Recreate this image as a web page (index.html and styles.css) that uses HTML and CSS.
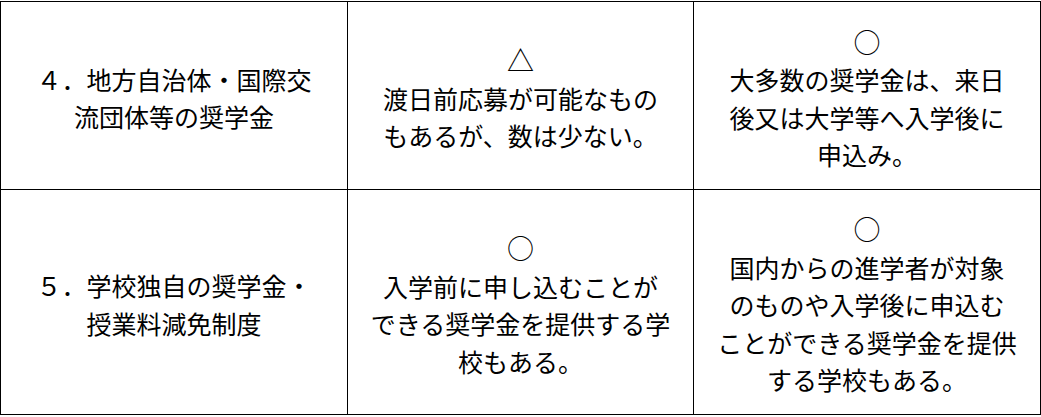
FILE: index.html
```html
<!DOCTYPE html>
<html lang="ja">
<head>
<meta charset="utf-8">
<link rel="stylesheet" href="styles.css">
</head>
<body>
<table class="grid">
  <colgroup><col class="c1"><col class="c2"><col class="c3"></colgroup>
  <tr class="r1">
    <td>４．地方自治体・国際交<br>流団体等の奨学金</td>
    <td><span class="mark">△</span><br>渡日前応募が可能なもの<br>もあるが、数は少ない。</td>
    <td><span class="mark">○</span><br>大多数の奨学金は、来日<br>後又は大学等へ入学後に<br>申込み。</td>
  </tr>
  <tr class="r2">
    <td>５．学校独自の奨学金・<br>授業料減免制度</td>
    <td><span class="mark">○</span><br>入学前に申し込むことが<br>できる奨学金を提供する学<br>校もある。</td>
    <td><span class="mark">○</span><br>国内からの進学者が対象<br>のものや入学後に申込む<br>ことができる奨学金を提供<br>する学校もある。</td>
  </tr>
</table>
</body>
</html>
```

FILE: styles.css
```css
html, body {
  margin: 0;
  padding: 0;
  background: #fff;
}
body {
  padding-top: 1px;
  font-family: "Noto Sans CJK JP", "Noto Sans", sans-serif;
  color: #000;
}
.grid {
  border-collapse: collapse;
  table-layout: fixed;
  width: 1041px;
}
.c1 { width: 347px; }
.c2 { width: 346px; }
.c3 { width: 347px; }
.grid td {
  border: 1px solid #000;
  padding: 5px 0 0 0;
  text-align: center;
  vertical-align: middle;
  font-size: 25px;
  line-height: 37.5px;
  white-space: nowrap;
}
.r1 td { height: 182px; }
.r2 td { height: 219px; }
.mark {
  font-size: 27px;
}
```
